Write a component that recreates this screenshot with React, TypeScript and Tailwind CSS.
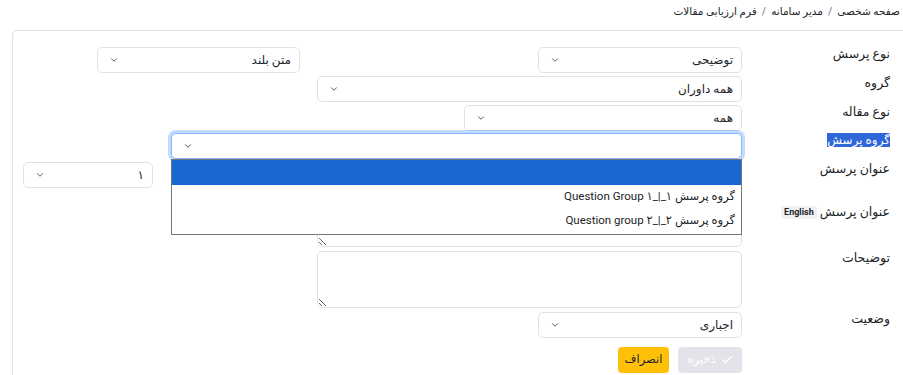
import { Check, ChevronDown } from "lucide-react";

type SelectProps = {
  value?: string;
  width: string;
  focused?: boolean;
  children?: React.ReactNode;
};

function FakeSelect({ value, width, focused, children }: SelectProps) {
  return (
    <div className={`relative ${width} h-[26px] shrink-0`}>
      <div
        className={
          focused
            ? "flex h-full items-center justify-between rounded-[5px] border border-[#86b7fe] bg-white pr-[8px] pl-[11px] shadow-[0_0_0_3px_rgba(13,110,253,0.25)]"
            : "flex h-full items-center justify-between rounded-[5px] border border-[#dee2e6] bg-white pr-[8px] pl-[11px]"
        }
      >
        <span className="text-[12px] leading-none">{value}</span>
        <ChevronDown size={10} strokeWidth={2} className="text-[#343a40]" />
      </div>
      {children}
    </div>
  );
}

function Label({ children }: { children: React.ReactNode }) {
  return (
    <div className="-mt-[1px] w-[152px] shrink-0 pr-[4px] text-[12.5px] leading-[16px]">{children}</div>
  );
}

export default function App() {
  const crumbs = ["صفحه شخصی", "مدیر سامانه", "فرم ارزیابی مقالات"];

  return (
    <div
      dir="rtl"
      className="h-[375px] w-[903px] overflow-hidden bg-white text-[#212529]"
      style={{ fontFamily: 'Roboto, "DejaVu Sans", sans-serif' }}
    >
      {/* breadcrumb */}
      <div className="flex h-[24px] items-center gap-[5px] pr-[3px] text-[10.5px]">
        {crumbs.map((c, i) => (
          <span key={c} className="flex items-center gap-[5px]">
            {i > 0 && <span className="text-[#6c757d]">/</span>}
            <span>{c}</span>
          </span>
        ))}
      </div>

      <div className="ml-[12px] mr-[-4px] mt-[6px] h-[400px] rounded-[5px] border border-[#dee2e6] pr-[12px] pt-[16px]">
        {/* نوع پرسش */}
        <div className="flex items-start">
          <Label>نوع پرسش</Label>
          <FakeSelect value="توضیحی" width="w-[204px]" />
          <div className="w-[238px] shrink-0" />
          <FakeSelect value="متن بلند" width="w-[203px]" />
        </div>

        {/* گروه */}
        <div className="mt-[3px] flex items-start">
          <Label>گروه</Label>
          <FakeSelect value="همه داوران" width="w-[425px]" />
        </div>

        {/* نوع مقاله */}
        <div className="mt-[3px] flex items-start">
          <Label>نوع مقاله</Label>
          <FakeSelect value="همه" width="w-[278px]" />
        </div>

        {/* گروه پرسش */}
        <div className="relative z-10 mt-[2px] flex items-start">
          <Label>
            <span className="mt-[1px] inline-block bg-[#2f66d8] text-[12px] leading-[14px] text-white">گروه پرسش</span>
          </Label>
          <FakeSelect width="w-[571px]" focused>
            <div className="absolute top-full right-0 left-0 h-[76px] border border-[#767676] bg-white text-[11.5px]">
              <div className="h-[25px] bg-[#1a67d2]" />
              <div className="flex h-[24px] items-center pr-[6px]">
                گروه پرسش ۱_|_۱ Question Group
              </div>
              <div className="flex h-[24px] items-center pr-[6px]">
                گروه پرسش ۲_|_۲ Question group
              </div>
            </div>
          </FakeSelect>
        </div>

        {/* عنوان پرسش */}
        <div className="mt-[3px] flex items-start">
          <Label>عنوان پرسش</Label>
          <textarea className="h-[39px] w-[425px] shrink-0 rounded-[5px] border border-[#dee2e6] outline-none" />
          <div className="w-[164px] shrink-0" />
          <FakeSelect value="۱" width="w-[130px]" />
        </div>

        {/* عنوان پرسش English */}
        <div className="mt-[4px] flex items-start">
          <Label>
            <div className="flex items-center gap-[3px]">
              <span>عنوان پرسش</span>
              <span className="rounded-[3px] bg-[#f0f1f3] px-[3px] py-px text-[9px] font-bold leading-[11px]">
                English
              </span>
            </div>
          </Label>
          <textarea className="h-[42px] w-[425px] shrink-0 rounded-[5px] border border-[#dee2e6] outline-none" />
        </div>

        {/* توضیحات */}
        <div className="mt-[4px] flex items-start">
          <Label>توضیحات</Label>
          <textarea className="h-[57px] w-[425px] shrink-0 rounded-[5px] border border-[#dee2e6] outline-none" />
        </div>

        {/* وضعیت */}
        <div className="mt-[4px] flex items-start">
          <Label>وضعیت</Label>
          <FakeSelect value="اجباری" width="w-[204px]" />
        </div>

        {/* buttons */}
        <div className="mt-[9px] flex items-start">
          <div className="w-[152px] shrink-0" />
          <button className="flex h-[26px] w-[64px] items-center justify-center gap-[5px] rounded-[4px] bg-[#e3e4ea] text-[11.5px] text-white">
            <Check size={12} strokeWidth={3} />
            <span>ذخیره</span>
          </button>
          <button className="mr-[9px] h-[26px] w-[51px] rounded-[4px] bg-[#ffc107] text-[11.5px] text-[#212529]">
            انصراف
          </button>
        </div>
      </div>
    </div>
  );
}
